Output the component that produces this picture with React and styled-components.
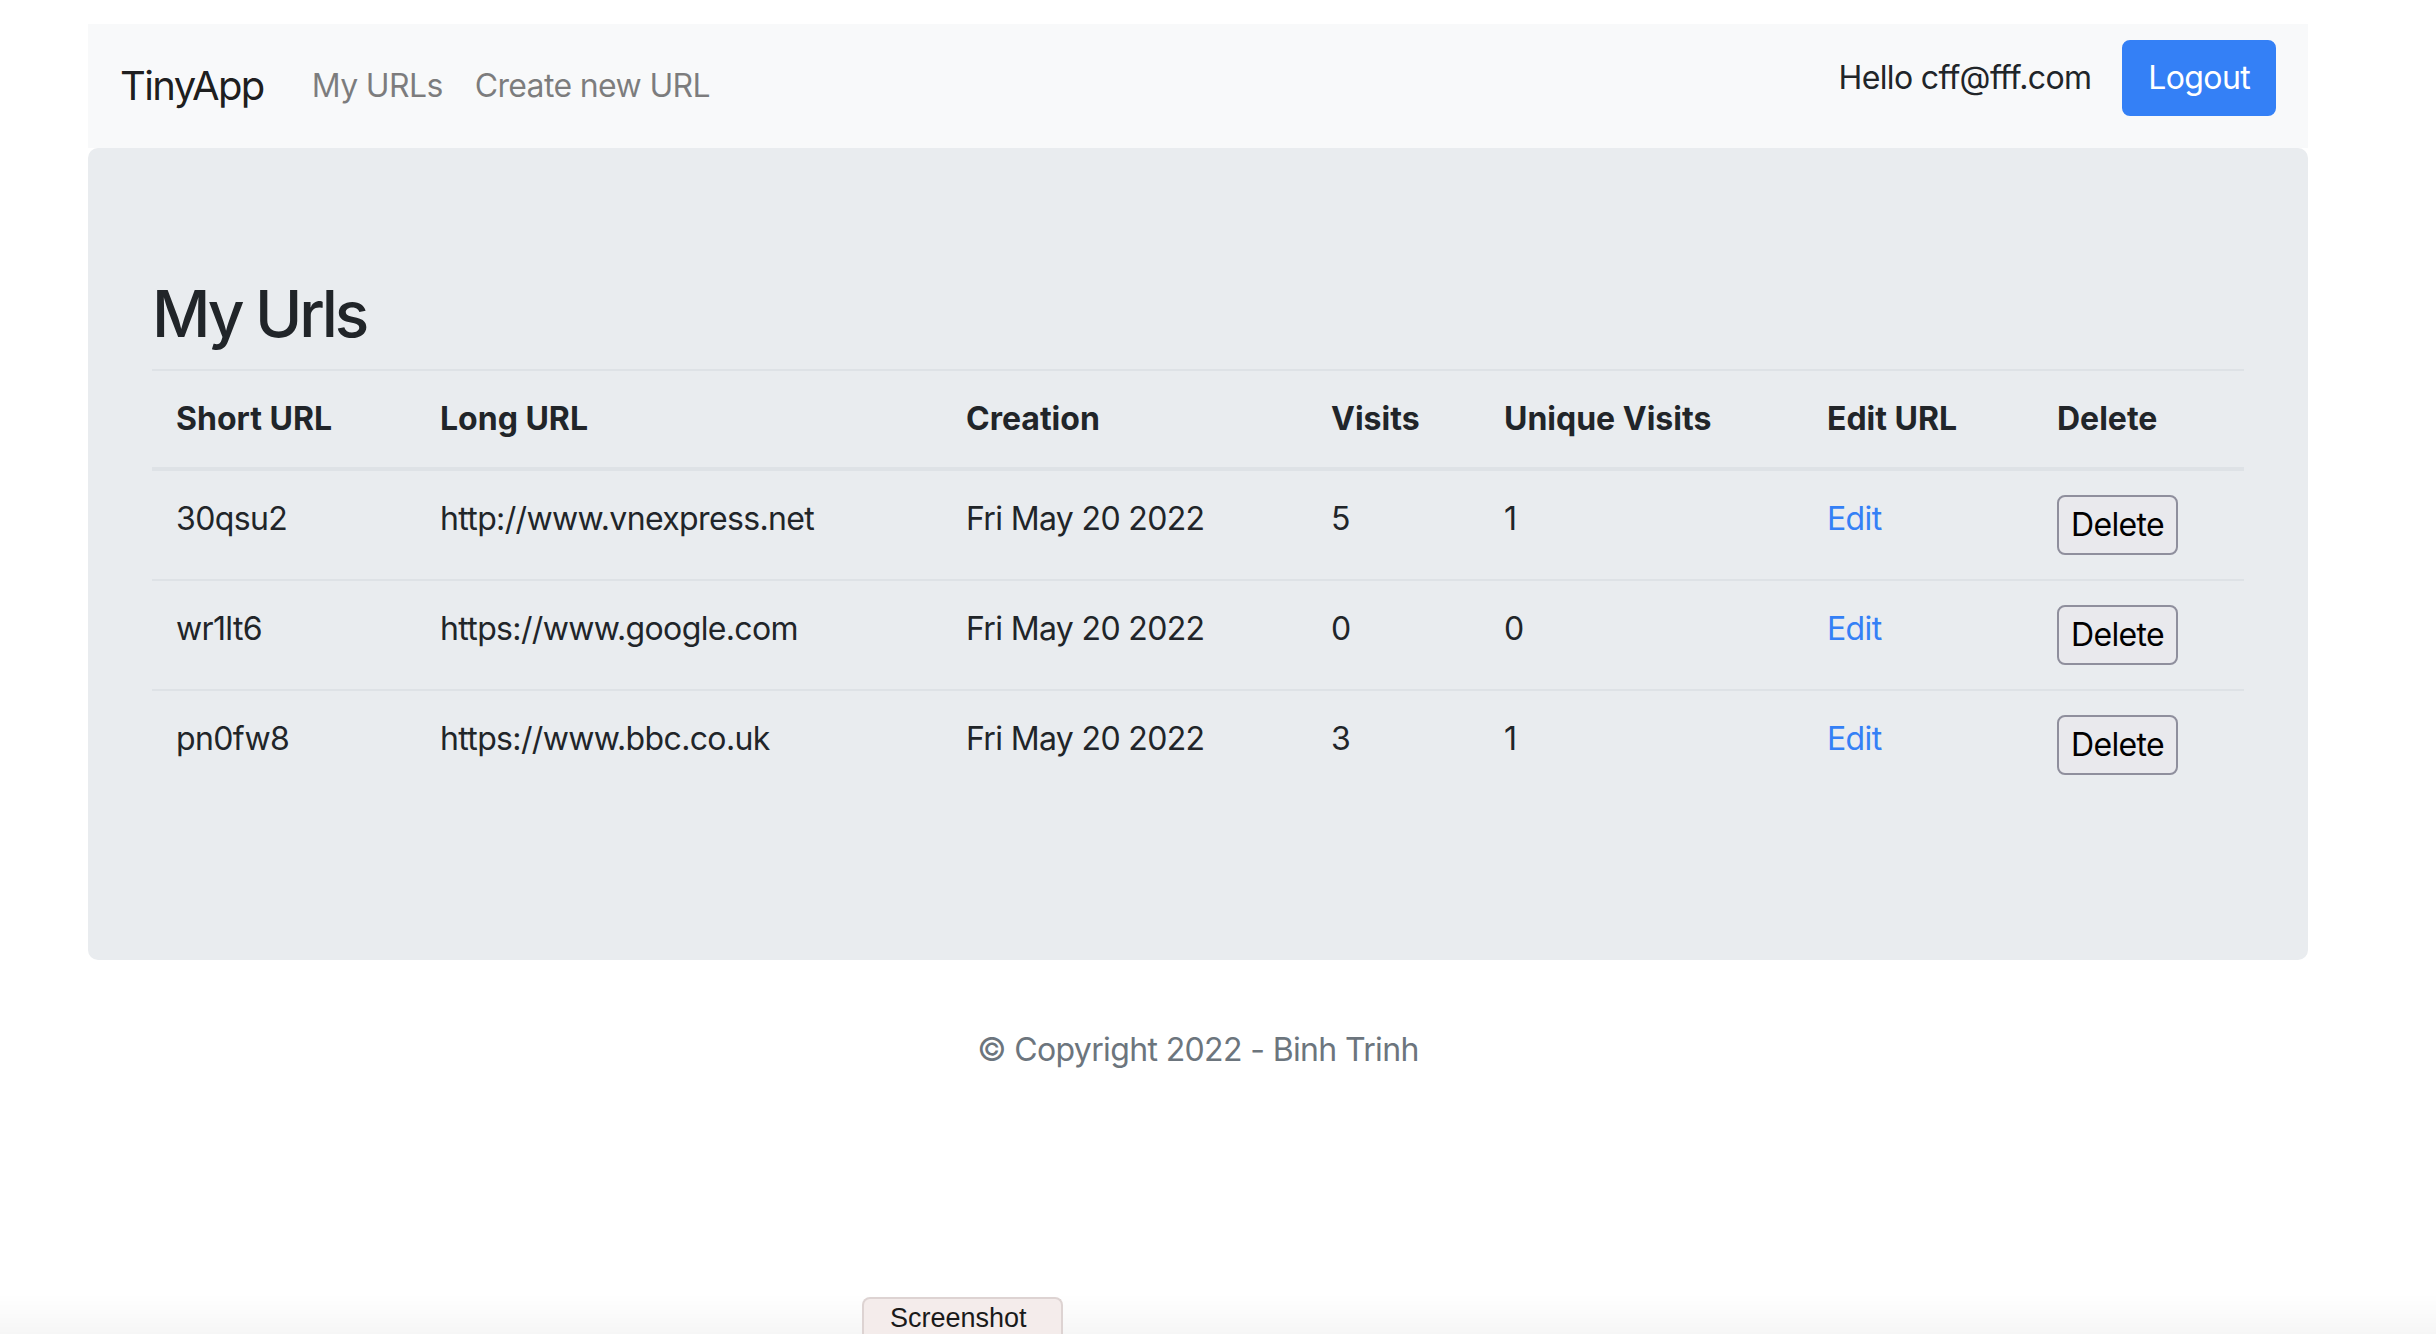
import React from 'react';
import styled, { createGlobalStyle } from 'styled-components';

const GlobalStyle = createGlobalStyle`
  html, body {
    margin: 0;
    padding: 0;
    background: #ffffff;
  }
  body {
    font-family: Inter, "Noto Sans", "Liberation Sans", sans-serif;
    font-size: 32px;
    line-height: 1.5;
    letter-spacing: -0.02em;
    color: #212529;
    height: 1334px;
    overflow: hidden;
  }
  * {
    box-sizing: border-box;
  }
`;

const urls = [
  { short: '30qsu2', long: 'http://www.vnexpress.net', date: 'Fri May 20 2022', visits: 5, unique: 1 },
  { short: 'wr1lt6', long: 'https://www.google.com', date: 'Fri May 20 2022', visits: 0, unique: 0 },
  { short: 'pn0fw8', long: 'https://www.bbc.co.uk', date: 'Fri May 20 2022', visits: 3, unique: 1 },
];

const columns = [
  { label: 'Short URL', width: 264 },
  { label: 'Long URL', width: 526 },
  { label: 'Creation', width: 365 },
  { label: 'Visits', width: 173 },
  { label: 'Unique Visits', width: 323 },
  { label: 'Edit URL', width: 230 },
  { label: 'Delete', width: 211 },
];

function App() {
  return (
    <>
      <GlobalStyle />
      <Page>
        <NavBar>
          <NavLeft>
            <Brand href="#">TinyApp</Brand>
            <NavLink href="#">My URLs</NavLink>
            <NavLink href="#">Create new URL</NavLink>
          </NavLeft>
          <NavRight>
            <Hello>Hello cff@fff.com</Hello>
            <LogoutButton type="button">Logout</LogoutButton>
          </NavRight>
        </NavBar>

        <Jumbotron>
          <Title>My Urls</Title>
          <Table>
            <colgroup>
              { columns.map(c => <Col key={ c.label } $w={ c.width } />) }
            </colgroup>
            <thead>
              <tr>
                { columns.map(c => <Th key={ c.label }>{ c.label }</Th>) }
              </tr>
            </thead>
            <tbody>
              { urls.map(u =>
                <tr key={ u.short }>
                  <Td>{ u.short }</Td>
                  <Td>{ u.long }</Td>
                  <Td>{ u.date }</Td>
                  <Td>{ u.visits }</Td>
                  <Td>{ u.unique }</Td>
                  <Td><EditLink href="#">Edit</EditLink></Td>
                  <Td><DeleteButton type="button">Delete</DeleteButton></Td>
                </tr>
              )}
            </tbody>
          </Table>
        </Jumbotron>

        <Footer>© Copyright 2022 - Binh Trinh</Footer>
      </Page>

      <BottomShade>
        <ScreenshotTab>Screenshot</ScreenshotTab>
      </BottomShade>
    </>
  );
}

const Page = styled.div`
  width: 2220px;
  margin: 0 0 0 88px;
  padding-top: 24px;
`;

const NavBar = styled.nav`
  display: flex;
  align-items: center;
  justify-content: space-between;
  min-height: 124px;
  padding: 16px 32px;
  background-color: #f8f9fa;
`;

const NavLeft = styled.div`
  display: flex;
  align-items: center;
`;

const Brand = styled.a`
  font-size: 40px;
  line-height: 60px;
  letter-spacing: -0.04em;
  padding: 10px 0;
  margin-right: 32px;
  color: rgba(0, 0, 0, 0.9);
  text-decoration: none;
`;

const NavLink = styled.a`
  font-size: 32px;
  padding: 16px;
  color: rgba(0, 0, 0, 0.5);
  text-decoration: none;
`;

const NavRight = styled.div`
  display: flex;
  align-items: center;
  padding-bottom: 16px;
`;

const Hello = styled.span`
  margin-right: 31px;
  color: #212529;
`;

const LogoutButton = styled.button`
  font-family: inherit;
  font-size: 32px;
  line-height: 48px;
  letter-spacing: -0.02em;
  padding: 12px 24px;
  color: #ffffff;
  background-color: #3480f6;
  border: 2px solid #3480f6;
  border-radius: 8px;
`;

const Jumbotron = styled.div`
  background-color: #e9ecef;
  border-radius: 10px;
  padding: 128px 64px 129px;
  margin-bottom: 66px;
`;

const Title = styled.h2`
  margin: 0 0 16px;
  font-size: 64px;
  font-weight: 500;
  line-height: 1.2;
  letter-spacing: -0.05em;
  color: #212529;
`;

const Table = styled.table`
  width: 100%;
  table-layout: fixed;
  border-collapse: collapse;
  margin-bottom: 32px;
  color: #212529;
`;

const Col = styled.col`
  width: ${p => p.$w}px;
`;

const Th = styled.th`
  text-align: left;
  font-weight: 700;
  letter-spacing: normal;
  padding: 24px;
  vertical-align: bottom;
  border-top: 2px solid #dee2e6;
  border-bottom: 4px solid #dee2e6;
  white-space: nowrap;
`;

const Td = styled.td`
  padding: 24px;
  vertical-align: top;
  border-top: 2px solid #dee2e6;
  white-space: nowrap;
`;

const EditLink = styled.a`
  color: #3480f6;
  text-decoration: none;
`;

const DeleteButton = styled.button`
  font-family: inherit;
  font-size: 32px;
  line-height: 48px;
  letter-spacing: -0.02em;
  padding: 4px 12px;
  color: #000000;
  background-color: #e9e9ed;
  border: 2px solid #8f8f9d;
  border-radius: 8px;
`;

const Footer = styled.footer`
  text-align: center;
  color: #6c757d;
`;

const BottomShade = styled.div`
  position: fixed;
  left: 0;
  right: 0;
  bottom: 0;
  height: 40px;
  background: linear-gradient(to bottom, rgba(0, 0, 0, 0), rgba(0, 0, 0, 0.035));
  display: flex;
  align-items: flex-end;
  padding-left: 862px;
`;

const ScreenshotTab = styled.div`
  width: 201px;
  height: 37px;
  padding: 3px 0 0 26px;
  font-family: "Liberation Sans", Arial, sans-serif;
  font-size: 27px;
  line-height: 32px;
  letter-spacing: normal;
  color: #1a1a1a;
  background-color: #f4eceb;
  border: 2px solid #ddd3d2;
  border-bottom: none;
  border-radius: 8px 8px 0 0;
  overflow: hidden;
`;

export { App as default };
